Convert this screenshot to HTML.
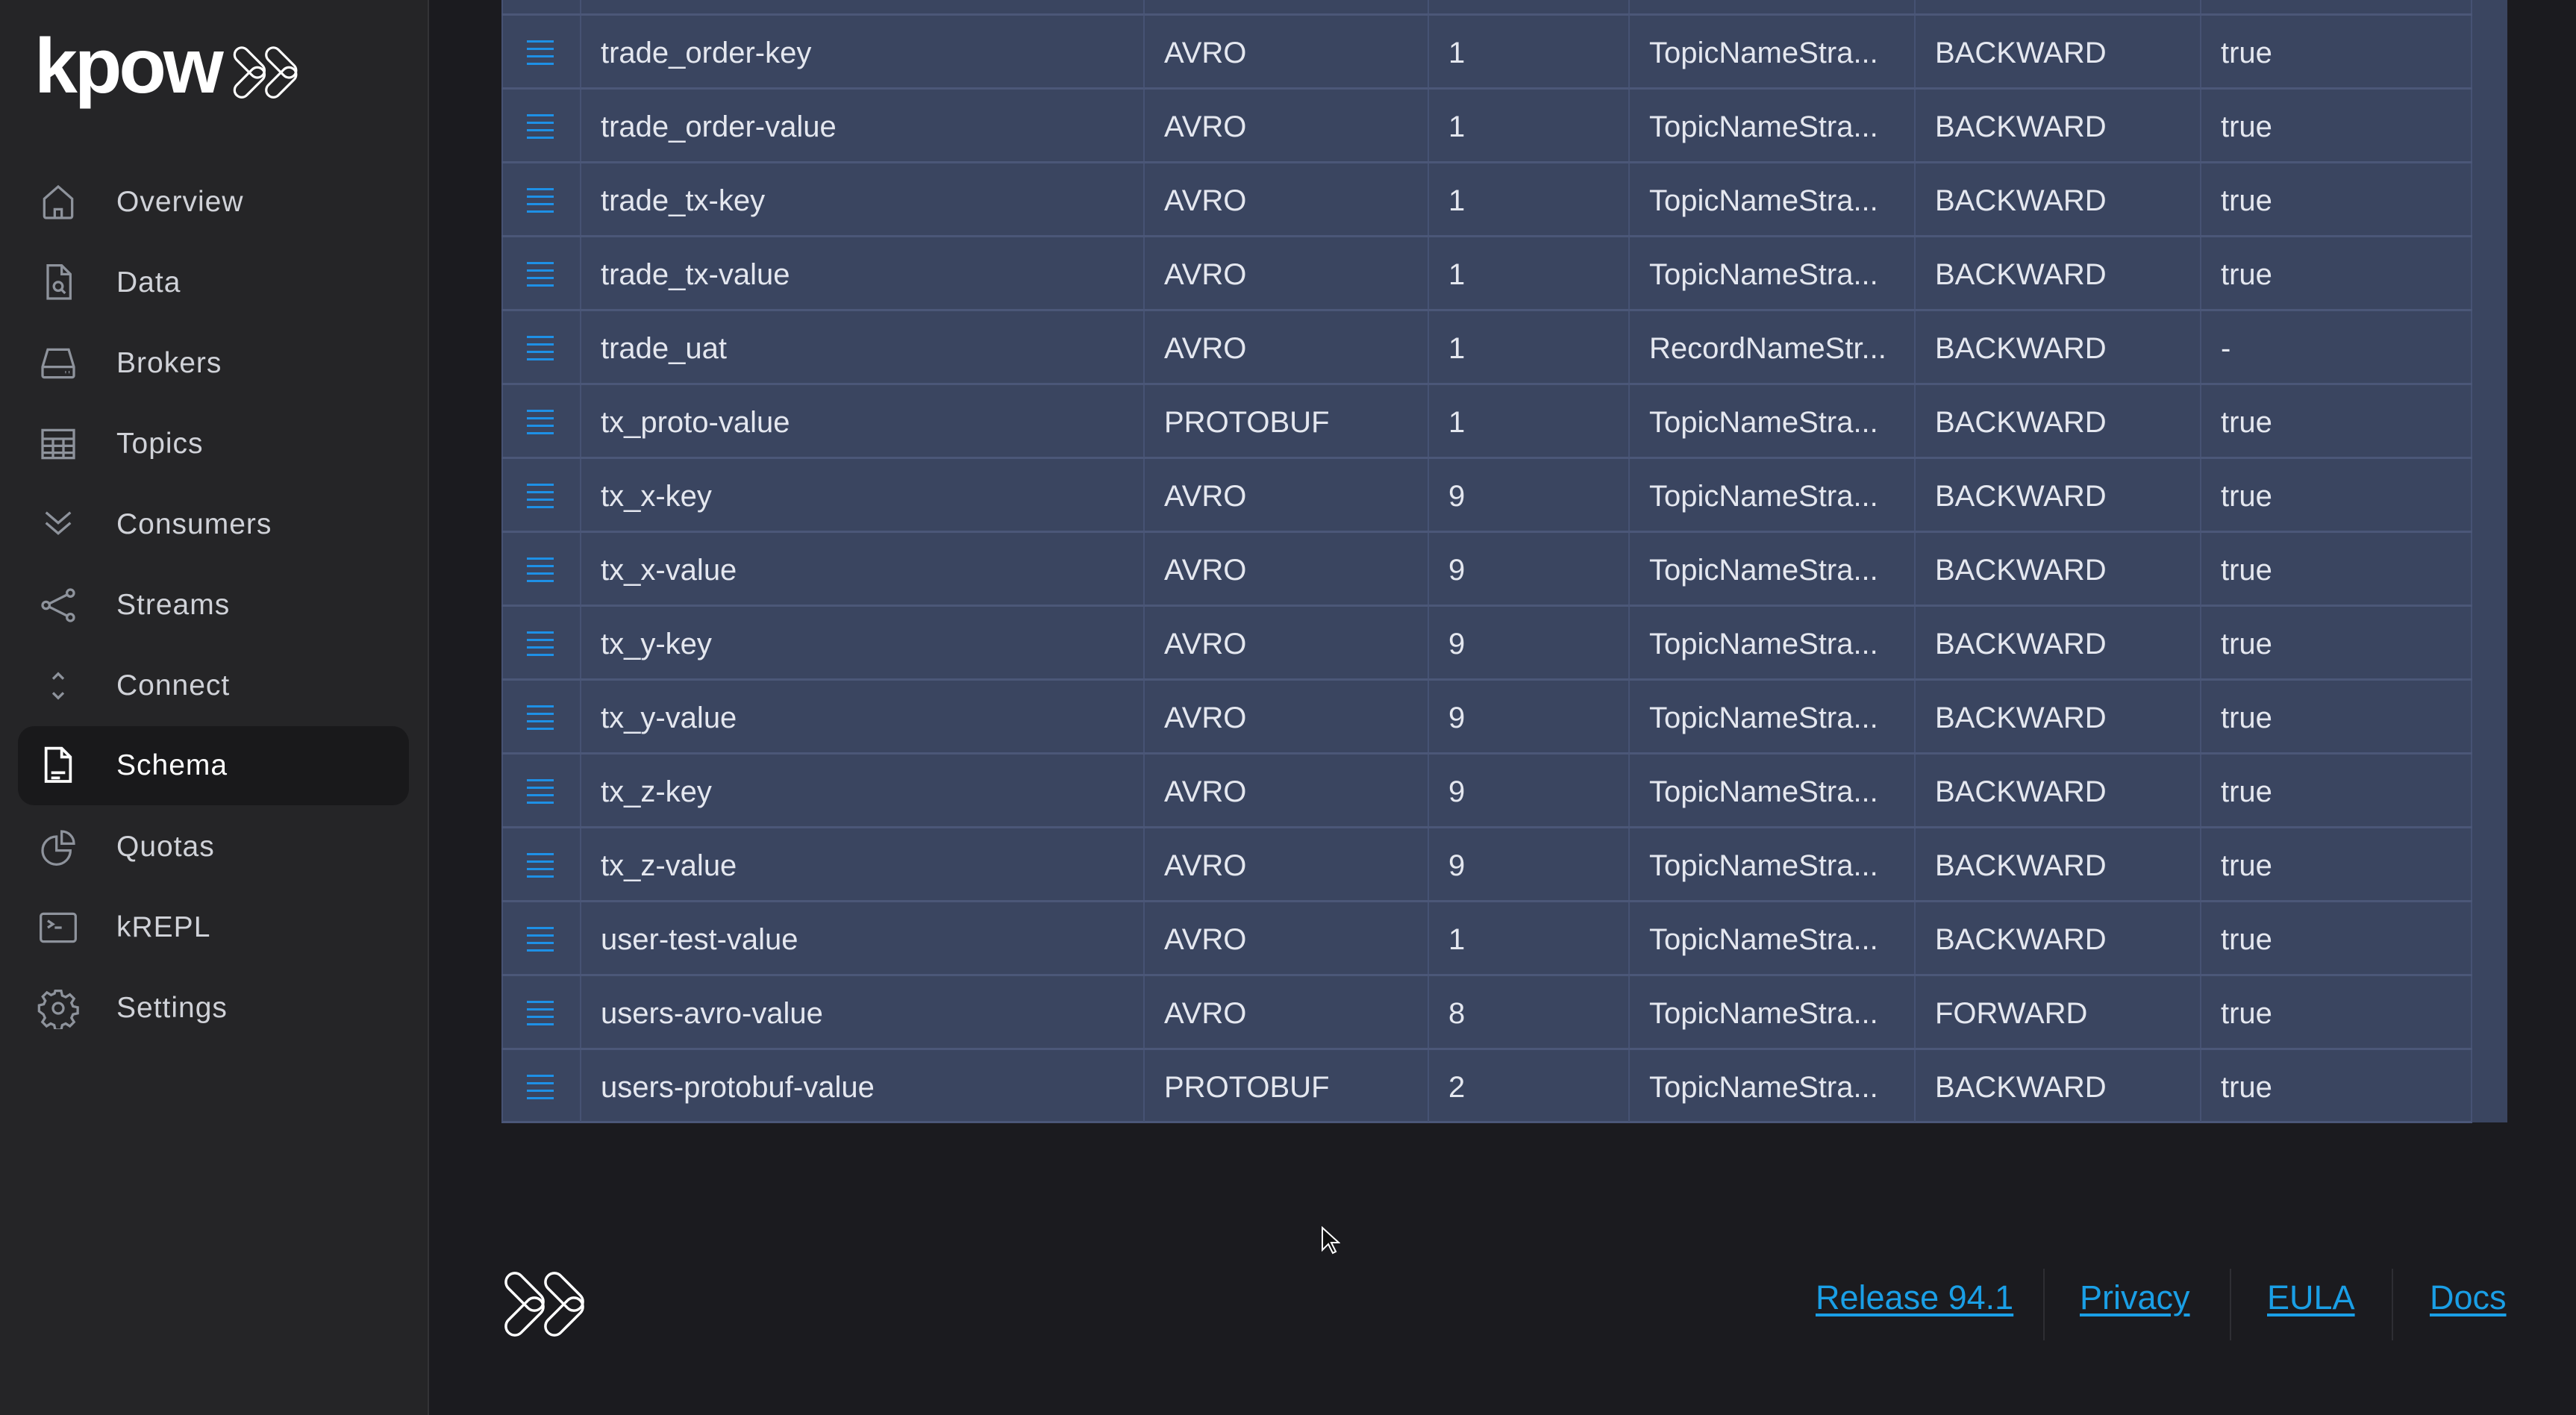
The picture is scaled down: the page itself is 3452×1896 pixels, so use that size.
<!DOCTYPE html>
<html><head><meta charset="utf-8">
<style>
*{margin:0;padding:0;box-sizing:border-box}
html,body{width:3452px;height:1896px;overflow:hidden;background:#1b1b1f;font-family:"Liberation Sans",sans-serif}
#side{position:absolute;left:0;top:0;width:575px;height:1896px;background:#252527;border-right:2px solid #333336}
.nav{position:absolute;left:24px;width:524px;height:106px;color:#d0d2d8;font-size:39px;letter-spacing:1px}
.nav span{position:absolute;left:132px;top:50%;transform:translateY(-50%)}
.nav svg{position:absolute;left:26px;top:50%;transform:translateY(-50%)}
.nav.sel{background:#19191b;border-radius:22px;color:#fff}
#panel{position:absolute;left:672px;top:0;width:2688px;height:1504px;background:#3a4560}
.row{position:absolute;left:672px;width:2641px;height:99px;border-top:3px solid #4b5778;color:#e4e7ef;font-size:40px}
.row>div{position:absolute;top:0;height:96px;line-height:100px;border-left:2px solid #465273;white-space:nowrap}
.c0{left:0;width:105px}.c1{left:105px;width:755px;padding-left:26px}.c2{left:860px;width:381px;padding-left:26px}
.c3{left:1241px;width:269px;padding-left:26px}.c4{left:1510px;width:383px;padding-left:26px}
.c5{left:1893px;width:383px;padding-left:26px}.c6{left:2276px;width:365px;padding-left:26px;border-right:2px solid #465273}
.ham{position:absolute;left:32px;top:33px;width:36px}
.ham i{display:block;height:3px;background:#1e90e6;margin-bottom:7px}
.lnk{position:absolute;top:1713px;color:#1a9fe6;font-size:45px;text-decoration:underline;text-underline-offset:6px}
.sep{position:absolute;top:1700px;width:2px;height:96px;background:#2e2e33}
</style></head><body>
<div id="side">
  <div style="position:absolute;left:46px;top:30px;color:#fff;font-size:104px;font-weight:bold;letter-spacing:-4px">kpow</div>
  <svg style="position:absolute;left:300px;top:43px" width="112" height="97" viewBox="0 0 140 121" fill="none" stroke="#fff" stroke-width="4">
    <rect x="12.5" y="39" width="61" height="24" rx="12" transform="rotate(45 43 51)"/>
    <rect x="12.5" y="72" width="61" height="24" rx="12" transform="rotate(-45 43 84)"/>
    <rect x="65.5" y="39" width="61" height="24" rx="12" transform="rotate(45 96 51)"/>
    <rect x="65.5" y="72" width="61" height="24" rx="12" transform="rotate(-45 96 84)"/>
  </svg>
  <div class="nav" style="top:218px"><svg width="56" height="56" viewBox="0 0 24 24" fill="none" stroke="#8e939c" stroke-width="1.4"><path d="M4 10L12 3l8 7v10a1 1 0 0 1-1 1H5a1 1 0 0 1-1-1z"/><path d="M10 21v-5h4v5"/></svg><span>Overview</span></div>
  <div class="nav" style="top:326px"><svg width="56" height="56" viewBox="0 0 24 24" fill="none" stroke="#8e939c" stroke-width="1.4"><path d="M6 2h8l5 5v14H6z"/><path d="M14 2v5h5"/><circle cx="12" cy="14" r="2.5"/><path d="M14 16l2 2"/></svg><span>Data</span></div>
  <div class="nav" style="top:434px"><svg width="56" height="56" viewBox="0 0 24 24" fill="none" stroke="#8e939c" stroke-width="1.4"><path d="M6 4h12l3 10v5a1 1 0 0 1-1 1H4a1 1 0 0 1-1-1v-5z"/><path d="M3 14h18"/><path d="M16 17h.5M18 17h.5"/></svg><span>Brokers</span></div>
  <div class="nav" style="top:542px"><svg width="56" height="56" viewBox="0 0 24 24" fill="none" stroke="#8e939c" stroke-width="1.4"><rect x="3" y="4" width="18" height="16"/><path d="M3 9h18M3 13h18M3 17h18M9 9v11M15 9v11"/></svg><span>Topics</span></div>
  <div class="nav" style="top:650px"><svg width="56" height="56" viewBox="0 0 24 24" fill="none" stroke="#8e939c" stroke-width="1.4"><path d="M5 5l7 6 7-6M5 11l7 6 7-6"/></svg><span>Consumers</span></div>
  <div class="nav" style="top:758px"><svg width="56" height="56" viewBox="0 0 24 24" fill="none" stroke="#8e939c" stroke-width="1.4"><circle cx="5" cy="12" r="2"/><circle cx="19" cy="5" r="2"/><circle cx="19" cy="19" r="2"/><path d="M7 11l10-5M7 13l10 5"/></svg><span>Streams</span></div>
  <div class="nav" style="top:866px"><svg width="56" height="56" viewBox="0 0 24 24" fill="none" stroke="#8e939c" stroke-width="1.4"><path d="M9 8l3-3 3 3M9 16l3 3 3-3"/></svg><span>Connect</span></div>
  <div class="nav sel" style="top:973px"><svg width="56" height="56" viewBox="0 0 24 24" fill="none" stroke="#fff" stroke-width="1.6"><path d="M5 2h9l5 5v14H5z"/><path d="M14 2v5h5"/><path d="M8 16h8M8 19h5"/></svg><span>Schema</span></div>
  <div class="nav" style="top:1082px"><svg width="56" height="56" viewBox="0 0 24 24" fill="none" stroke="#8e939c" stroke-width="1.4"><path d="M11 6a8 8 0 1 0 8 8h-8z"/><path d="M14 3a7 7 0 0 1 7 7h-7z"/></svg><span>Quotas</span></div>
  <div class="nav" style="top:1190px"><svg width="56" height="56" viewBox="0 0 24 24" fill="none" stroke="#8e939c" stroke-width="1.4"><rect x="2" y="4" width="20" height="16" rx="1.5"/><path d="M6 8l3 2-3 2M10 12h4"/></svg><span>kREPL</span></div>
  <div class="nav" style="top:1298px"><svg width="56" height="56" viewBox="0 0 24 24" fill="none" stroke="#8e939c" stroke-width="1.4"><circle cx="12" cy="12" r="3"/><path d="M10.3 2h3.4l.6 2.7 2 .9 2.4-1.5 2.4 2.4-1.5 2.4.9 2 2.7.6v3.4l-2.7.6-.9 2 1.5 2.4-2.4 2.4-2.4-1.5-2 .9-.6 2.7h-3.4l-.6-2.7-2-.9-2.4 1.5-2.4-2.4 1.5-2.4-.9-2L1 13.7v-3.4l2.7-.6.9-2-1.5-2.4 2.4-2.4 2.4 1.5 2-.9z"/></svg><span>Settings</span></div>
</div>

<div id="panel"></div>
<div class="row" style="top:-81px"><div class="c0"></div><div class="c1"></div><div class="c2"></div><div class="c3"></div><div class="c4"></div><div class="c5"></div><div class="c6"></div></div>
<div class="row" style="top:18px"><div class="c0"><div class="ham"><i></i><i></i><i></i><i></i></div></div><div class="c1">trade_order-key</div><div class="c2">AVRO</div><div class="c3">1</div><div class="c4">TopicNameStra...</div><div class="c5">BACKWARD</div><div class="c6">true</div></div>
<div class="row" style="top:117px"><div class="c0"><div class="ham"><i></i><i></i><i></i><i></i></div></div><div class="c1">trade_order-value</div><div class="c2">AVRO</div><div class="c3">1</div><div class="c4">TopicNameStra...</div><div class="c5">BACKWARD</div><div class="c6">true</div></div>
<div class="row" style="top:216px"><div class="c0"><div class="ham"><i></i><i></i><i></i><i></i></div></div><div class="c1">trade_tx-key</div><div class="c2">AVRO</div><div class="c3">1</div><div class="c4">TopicNameStra...</div><div class="c5">BACKWARD</div><div class="c6">true</div></div>
<div class="row" style="top:315px"><div class="c0"><div class="ham"><i></i><i></i><i></i><i></i></div></div><div class="c1">trade_tx-value</div><div class="c2">AVRO</div><div class="c3">1</div><div class="c4">TopicNameStra...</div><div class="c5">BACKWARD</div><div class="c6">true</div></div>
<div class="row" style="top:414px"><div class="c0"><div class="ham"><i></i><i></i><i></i><i></i></div></div><div class="c1">trade_uat</div><div class="c2">AVRO</div><div class="c3">1</div><div class="c4">RecordNameStr...</div><div class="c5">BACKWARD</div><div class="c6">-</div></div>
<div class="row" style="top:513px"><div class="c0"><div class="ham"><i></i><i></i><i></i><i></i></div></div><div class="c1">tx_proto-value</div><div class="c2">PROTOBUF</div><div class="c3">1</div><div class="c4">TopicNameStra...</div><div class="c5">BACKWARD</div><div class="c6">true</div></div>
<div class="row" style="top:612px"><div class="c0"><div class="ham"><i></i><i></i><i></i><i></i></div></div><div class="c1">tx_x-key</div><div class="c2">AVRO</div><div class="c3">9</div><div class="c4">TopicNameStra...</div><div class="c5">BACKWARD</div><div class="c6">true</div></div>
<div class="row" style="top:711px"><div class="c0"><div class="ham"><i></i><i></i><i></i><i></i></div></div><div class="c1">tx_x-value</div><div class="c2">AVRO</div><div class="c3">9</div><div class="c4">TopicNameStra...</div><div class="c5">BACKWARD</div><div class="c6">true</div></div>
<div class="row" style="top:810px"><div class="c0"><div class="ham"><i></i><i></i><i></i><i></i></div></div><div class="c1">tx_y-key</div><div class="c2">AVRO</div><div class="c3">9</div><div class="c4">TopicNameStra...</div><div class="c5">BACKWARD</div><div class="c6">true</div></div>
<div class="row" style="top:909px"><div class="c0"><div class="ham"><i></i><i></i><i></i><i></i></div></div><div class="c1">tx_y-value</div><div class="c2">AVRO</div><div class="c3">9</div><div class="c4">TopicNameStra...</div><div class="c5">BACKWARD</div><div class="c6">true</div></div>
<div class="row" style="top:1008px"><div class="c0"><div class="ham"><i></i><i></i><i></i><i></i></div></div><div class="c1">tx_z-key</div><div class="c2">AVRO</div><div class="c3">9</div><div class="c4">TopicNameStra...</div><div class="c5">BACKWARD</div><div class="c6">true</div></div>
<div class="row" style="top:1107px"><div class="c0"><div class="ham"><i></i><i></i><i></i><i></i></div></div><div class="c1">tx_z-value</div><div class="c2">AVRO</div><div class="c3">9</div><div class="c4">TopicNameStra...</div><div class="c5">BACKWARD</div><div class="c6">true</div></div>
<div class="row" style="top:1206px"><div class="c0"><div class="ham"><i></i><i></i><i></i><i></i></div></div><div class="c1">user-test-value</div><div class="c2">AVRO</div><div class="c3">1</div><div class="c4">TopicNameStra...</div><div class="c5">BACKWARD</div><div class="c6">true</div></div>
<div class="row" style="top:1305px"><div class="c0"><div class="ham"><i></i><i></i><i></i><i></i></div></div><div class="c1">users-avro-value</div><div class="c2">AVRO</div><div class="c3">8</div><div class="c4">TopicNameStra...</div><div class="c5">FORWARD</div><div class="c6">true</div></div>
<div class="row" style="top:1404px;border-bottom:3px solid #4b5778;height:101px"><div class="c0"><div class="ham"><i></i><i></i><i></i><i></i></div></div><div class="c1">users-protobuf-value</div><div class="c2">PROTOBUF</div><div class="c3">2</div><div class="c4">TopicNameStra...</div><div class="c5">BACKWARD</div><div class="c6">true</div></div>

<svg style="position:absolute;left:660px;top:1680px" width="140" height="121" viewBox="0 0 140 121" fill="none" stroke="#fff" stroke-width="3.5">
  <rect x="12.5" y="39" width="61" height="24" rx="12" transform="rotate(45 43 51)"/>
  <rect x="12.5" y="72" width="61" height="24" rx="12" transform="rotate(-45 43 84)"/>
  <rect x="65.5" y="39" width="61" height="24" rx="12" transform="rotate(45 96 51)"/>
  <rect x="65.5" y="72" width="61" height="24" rx="12" transform="rotate(-45 96 84)"/>
</svg>
<svg style="position:absolute;left:1770px;top:1643px" width="26" height="40" viewBox="0 0 13 20"><path d="M1 1v15l4-4 3 6 2-1-3-6h5z" fill="#111" stroke="#fff" stroke-width="1"/></svg>

<div class="lnk" style="left:2433px">Release 94.1</div>
<div class="sep" style="left:2738px"></div>
<div class="lnk" style="left:2787px">Privacy</div>
<div class="sep" style="left:2988px"></div>
<div class="lnk" style="left:3038px">EULA</div>
<div class="sep" style="left:3205px"></div>
<div class="lnk" style="left:3256px">Docs</div>
</body></html>
